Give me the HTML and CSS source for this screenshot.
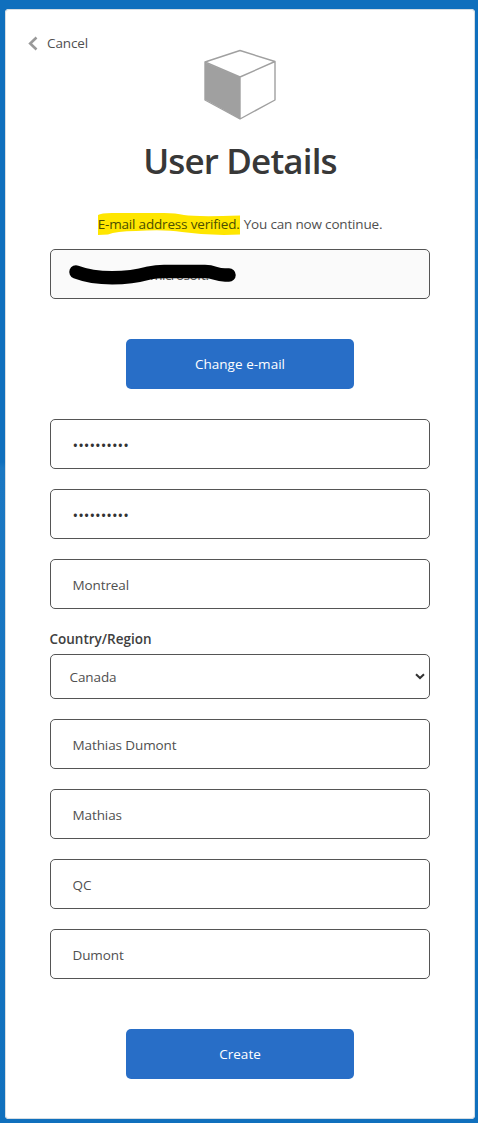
FILE: index.html
```html
<!DOCTYPE html>
<html lang="en">
<head>
<meta charset="utf-8">
<title>User Details</title>
<link rel="stylesheet" href="styles.css">
</head>
<body>
<main class="card">
  <header class="top">
    <a class="cancel"><svg class="chevron" width="10" height="15" viewBox="0 0 10 15"><path d="M8.5 1.500 2.200 7.500 8.500 13.500" fill="none" stroke="#999" stroke-width="2.600"/></svg><span>Cancel</span></a>
    <svg class="cube" width="74" height="72" viewBox="0 0 74 72">
      <path d="M2 13.500 37 28V70L2 50.500Z" fill="#a0a0a0"/>
      <path d="M2 13 37 1.500 72 12.500V51L37 70 2 51ZM2 13 37 28 72 12.500M37 28V70" fill="none" stroke="#a0a0a0" stroke-width="1.400" stroke-linejoin="round"/>
    </svg>
  </header>
  <h1 class="title">User Details</h1>
  <p class="notice"><span class="verified"><svg class="marker" width="142" height="24" viewBox="0 0 142 24"><path d="M0 3Q3 1 14 1L66 1Q78 1 86 3Q98 5 142 3.500V22.500Q112 24 84 20Q66 17 38 19Q18 19 10 22.500L0 23Z" fill="#ffe600"/></svg><span class="verified-text">E-mail address verified.</span></span><span class="continue">You can now continue.</span></p>
  <div class="field email"><span class="domain">microsoft.</span><svg class="redaction" width="172" height="26" viewBox="0 0 172 26"><path d="M9 9C30 17 60 16 82 10Q89 8.500 97 8.500H138C148 8.500 148 12 158 12H162" fill="none" stroke="#000" stroke-width="13.500" stroke-linecap="round" stroke-linejoin="round"/></svg></div>
  <button class="button change">Change e-mail</button>
  <div class="fields">
    <div class="field dots">••••••••••</div>
    <div class="field dots">••••••••••</div>
    <div class="field"><span>Montreal</span></div>
  </div>
  <label class="label"><span>Country/Region</span></label>
  <div class="field select"><span>Canada</span><svg width="10" height="7" viewBox="0 0 10 7"><path d="M1 1.200 5 5 9 1.200" fill="none" stroke="#333" stroke-width="2"/></svg></div>
  <div class="fields">
    <div class="field"><span>Mathias Dumont</span></div>
    <div class="field"><span>Mathias</span></div>
    <div class="field"><span>QC</span></div>
    <div class="field"><span>Dumont</span></div>
  </div>
  <button class="button create">Create</button>
</main>
</body>
</html>
```
FILE: styles.css
```css
* { box-sizing: border-box; }
body {
  margin: 0;
  height: 1123px;
  padding: 9px 3px 4px 5px;
  overflow: hidden;
  font: 400 13.500px/20px "Open Sans", "Noto Sans", sans-serif;
  color: #505050;
  background:
    linear-gradient(#0f6fbd 0 158px, #1a77c2 160px, #1070bd) right / 50% 100% no-repeat,
    linear-gradient(#0f6fbd 0 462px, #1a77c2 468px, #1070bd);
}
.card {
  width: 470px;
  height: 1110px;
  padding: 0 45px;
  background: #fff;
  border-radius: 4px;
  box-shadow: inset 0 0 0 1px #d5dde3;
  display: flex;
  flex-direction: column;
}
.top {
  height: 112px;
  flex: none;
  display: flex;
  align-items: flex-start;
  padding-top: 24px;
  margin-left: -22px;
}
.cancel { display: flex; align-items: center; width: 175px; letter-spacing: -.1px; }
.cancel span { margin-left: 9px; }
.chevron { margin-top: 1px; }
.cube { margin-top: 16px; }
.title {
  margin: 15px 0 0;
  text-align: center;
  font-size: 35px;
  line-height: 50px;
  font-weight: 600;
  letter-spacing: -.87px;
  color: #383838;
}
.notice { margin: 28px 0 15px; height: 20px; display: flex; justify-content: center; gap: 4px; white-space: nowrap; letter-spacing: -.18px; }
.verified { position: relative; width: 142px; color: #4b4e00; }
.marker { position: absolute; left: 0; top: -2px; }
.verified-text { position: relative; }
.field {
  height: 50px;
  flex: none;
  padding: 1px 22px 0 21.500px;
  border: 1px solid #555;
  border-radius: 5px;
  display: flex;
  align-items: center;
  letter-spacing: -.1px;
}
.email { position: relative; background: #fafafa; padding: 1px 0 0 99px; }
.domain { letter-spacing: -.5px; }
.redaction { position: absolute; left: 16px; top: 13px; }
.button {
  width: 228px;
  height: 50px;
  flex: none;
  align-self: center;
  border: 0;
  border-radius: 5px;
  background: #286ec7;
  color: #fff;
  font: 400 13.500px/20px "Open Sans", "Noto Sans", sans-serif;
  letter-spacing: .03px;
}
.change { margin: 40px 0 30px; }
.fields { display: grid; gap: 20px; }
.dots { font-size: 15px; letter-spacing: 0; color: #333; }
.label { height: 45px; padding-top: 20px; color: #404040; font-weight: 600; }
.label span { margin-left: -.5px; }
.select { height: 45px; padding: 1px 4px 0 18.500px; justify-content: space-between; margin-bottom: 20px; }
.select svg { margin-top: -2px; }
.create { margin-top: 50px; }
```
